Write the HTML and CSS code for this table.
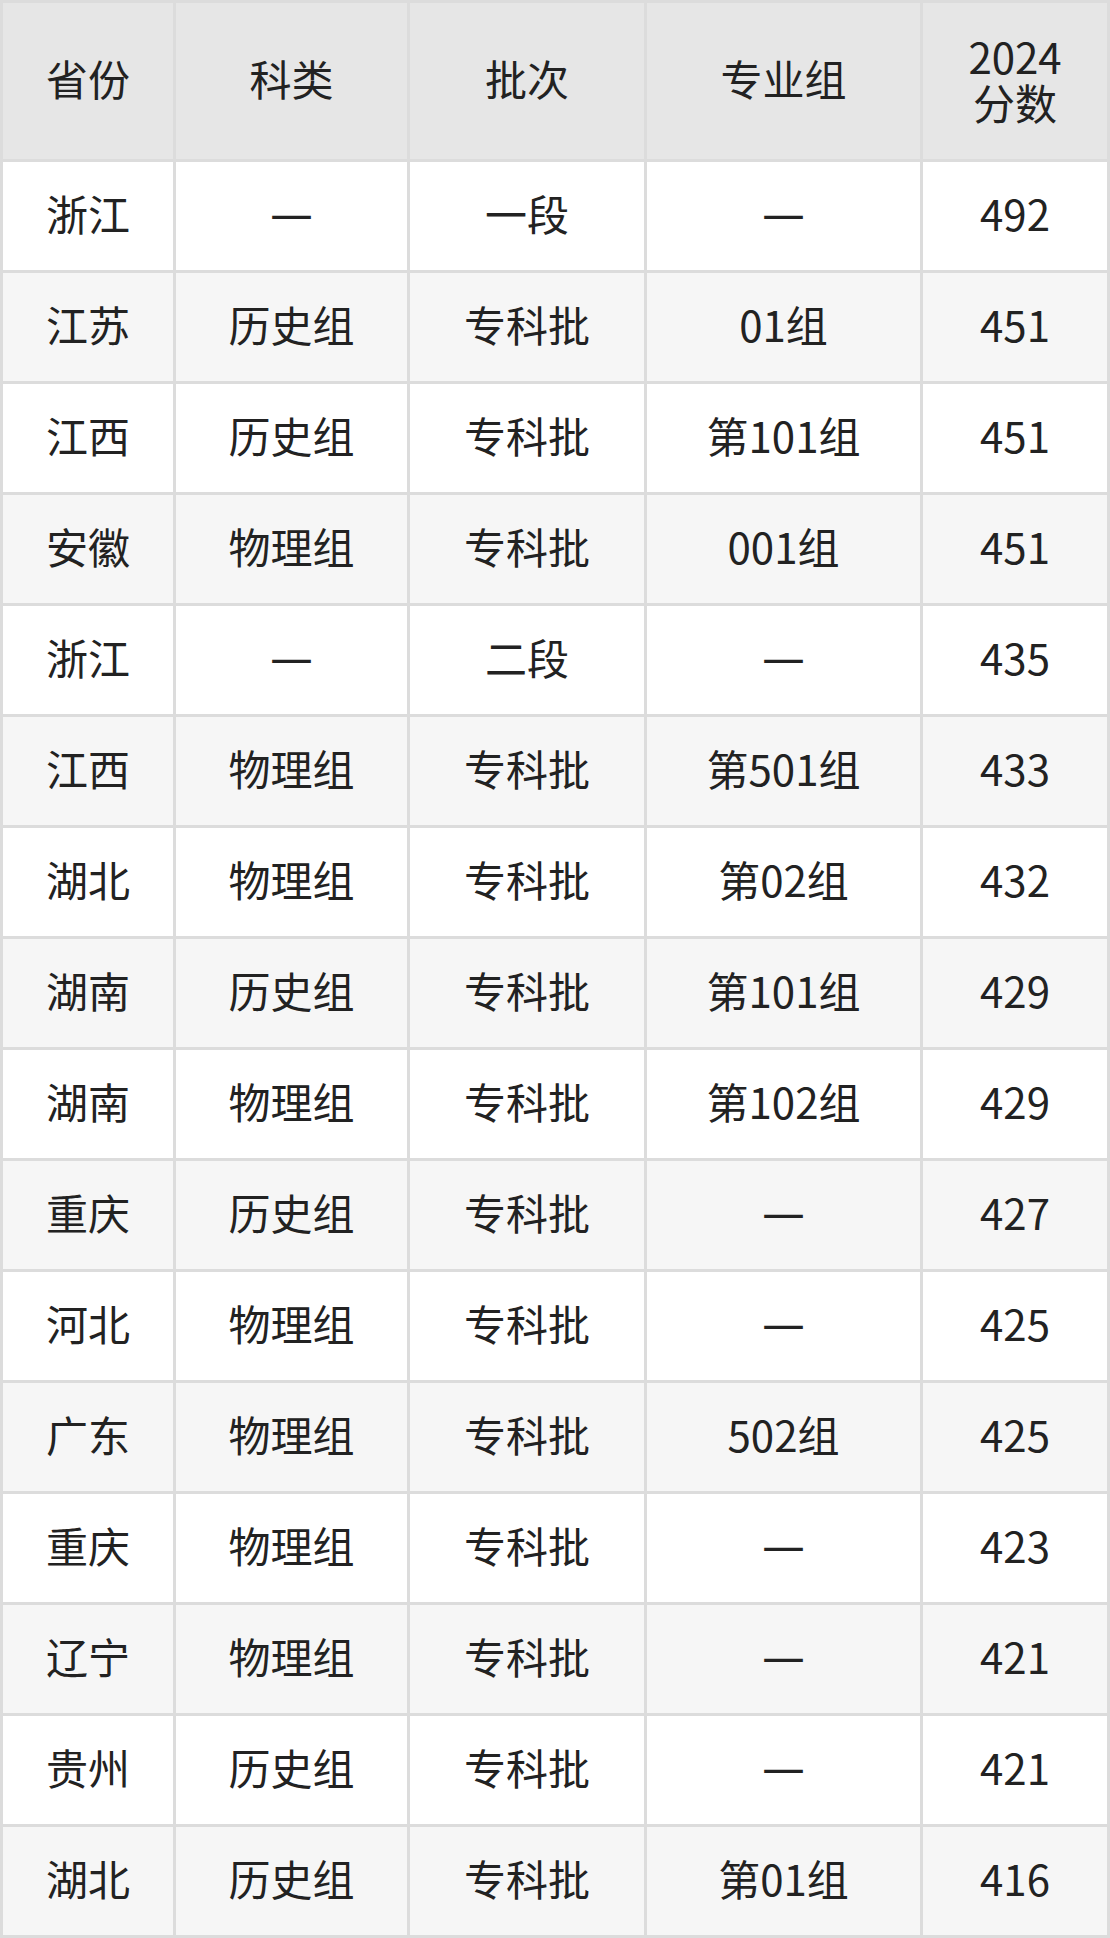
FILE: index.html
```html
<!DOCTYPE html>
<html lang="zh-CN">
<head>
<meta charset="utf-8">
<title>2024 分数</title>
<link rel="stylesheet" href="styles.css">
</head>
<body>
<table class="score-table">
  <colgroup>
    <col class="c-prov">
    <col class="c-type">
    <col class="c-batch">
    <col class="c-group">
    <col class="c-score">
  </colgroup>
  <thead>
    <tr class="head">
      <th>省份</th>
      <th>科类</th>
      <th>批次</th>
      <th>专业组</th>
      <th><span class="line">2024</span><span class="line">分数</span></th>
    </tr>
  </thead>
  <tbody>
    <tr><td>浙江</td><td class="dash">—</td><td>一段</td><td class="dash">—</td><td>492</td></tr>
    <tr><td>江苏</td><td>历史组</td><td>专科批</td><td>01组</td><td>451</td></tr>
    <tr><td>江西</td><td>历史组</td><td>专科批</td><td>第101组</td><td>451</td></tr>
    <tr><td>安徽</td><td>物理组</td><td>专科批</td><td>001组</td><td>451</td></tr>
    <tr><td>浙江</td><td class="dash">—</td><td>二段</td><td class="dash">—</td><td>435</td></tr>
    <tr><td>江西</td><td>物理组</td><td>专科批</td><td>第501组</td><td>433</td></tr>
    <tr><td>湖北</td><td>物理组</td><td>专科批</td><td>第02组</td><td>432</td></tr>
    <tr><td>湖南</td><td>历史组</td><td>专科批</td><td>第101组</td><td>429</td></tr>
    <tr><td>湖南</td><td>物理组</td><td>专科批</td><td>第102组</td><td>429</td></tr>
    <tr><td>重庆</td><td>历史组</td><td>专科批</td><td class="dash">—</td><td>427</td></tr>
    <tr><td>河北</td><td>物理组</td><td>专科批</td><td class="dash">—</td><td>425</td></tr>
    <tr><td>广东</td><td>物理组</td><td>专科批</td><td>502组</td><td>425</td></tr>
    <tr><td>重庆</td><td>物理组</td><td>专科批</td><td class="dash">—</td><td>423</td></tr>
    <tr><td>辽宁</td><td>物理组</td><td>专科批</td><td class="dash">—</td><td>421</td></tr>
    <tr><td>贵州</td><td>历史组</td><td>专科批</td><td class="dash">—</td><td>421</td></tr>
    <tr><td>湖北</td><td>历史组</td><td>专科批</td><td>第01组</td><td>416</td></tr>
  </tbody>
</table>
</body>
</html>
```
FILE: styles.css
```css
html, body {
  margin: 0;
  padding: 0;
  background: #ffffff;
}

.score-table {
  width: 1110px;
  table-layout: fixed;
  border-collapse: separate;
  border-spacing: 3px;
  background: #dcdcdc;
  font-family: "Noto Sans CJK SC", "Noto Sans", sans-serif;
  font-size: 42px;
  color: #222222;
}

.c-prov { width: 170px; }
.c-type { width: 231px; }
.c-batch { width: 234px; }
.c-group { width: 273px; }
.c-score { width: 184px; }

.score-table th,
.score-table td {
  padding: 0 0 5px;
  text-align: center;
  vertical-align: middle;
  font-weight: 400;
  line-height: 1.2;
}

.head th {
  height: 151px;
  background: #e6e6e6;
}

.head .line {
  display: block;
  line-height: 46px;
}

.score-table tbody td {
  height: 103px;
  background: #ffffff;
}

.score-table tbody tr:nth-child(even) td {
  background: #f6f6f6;
}

.score-table td.dash {
  font-family: "Noto Sans", "Noto Sans CJK SC", sans-serif;
}
```
